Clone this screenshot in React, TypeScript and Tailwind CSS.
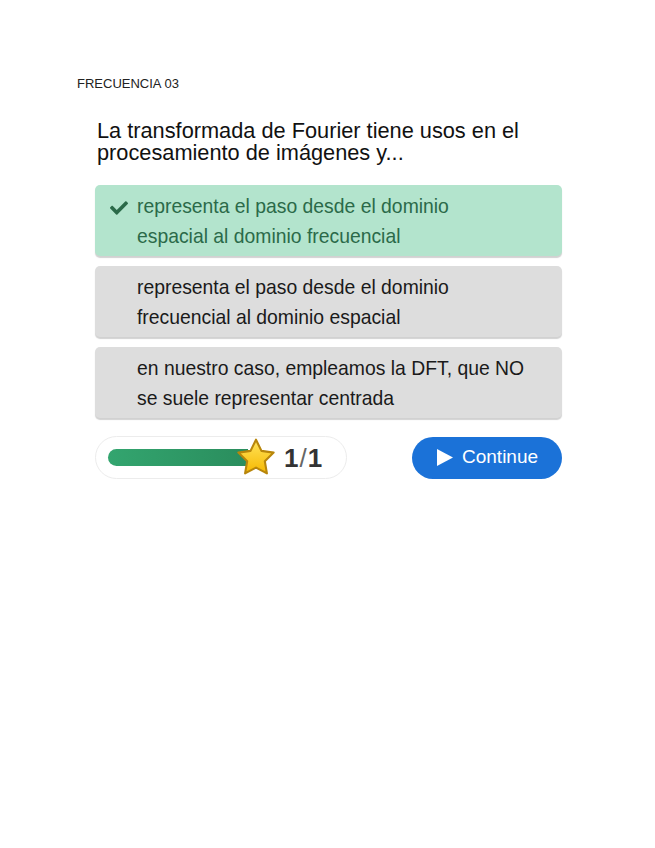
import React from "react";
import { FaCheck } from "react-icons/fa";

function Star() {
  return (
    <svg width="42" height="40" viewBox="0 0 40 38" className="absolute left-[-13px] top-[-12px]">
      <defs>
        <linearGradient id="sg" x1="0" y1="0" x2="0" y2="1">
          <stop offset="0" stopColor="#ffe45c" />
          <stop offset="1" stopColor="#f6b800" />
        </linearGradient>
      </defs>
      <path
        d="M20 2.5 L25.2 13.2 L36.8 14.8 L28.4 23 L30.4 34.6 L20 29.1 L9.6 34.6 L11.6 23 L3.2 14.8 L14.8 13.2 Z"
        fill="url(#sg)"
        stroke="#b8860b"
        strokeWidth="2"
        strokeLinejoin="round"
      />
    </svg>
  );
}

export default function App() {
  const font = { fontFamily: '"Liberation Sans", Arial, sans-serif' };
  return (
    <div className="w-[655px] h-[848px] bg-white" style={font}>
      <div className="pt-[76px] pl-[77px] text-[13px] leading-[16px] text-[#222]">FRECUENCIA 03</div>
      <div className="pl-[95px] w-[562px] box-content">
        <div className="mt-[28px] pl-[2px] text-[21.75px] leading-[22px] text-[#111]">
          La transformada de Fourier tiene usos en el
          <br />
          procesamiento de imágenes y...
        </div>
        <div className="mt-[21px] flex flex-col gap-[10px] w-[467px]">
          <div className="relative h-[71px] rounded-[5px] bg-[#b3e4cd] shadow-[0_2px_1px_rgba(0,0,0,0.18)] pl-[42px] flex items-center text-[19.35px] leading-[30px] text-[#2b6a49]">
            <FaCheck className="absolute left-[15px] top-[14px] text-[#2b6a49]" size={18} />
            <div>
              representa el paso desde el dominio
              <br />
              espacial al dominio frecuencial
            </div>
          </div>
          <div className="h-[71px] rounded-[5px] bg-[#dddddd] shadow-[0_2px_1px_rgba(0,0,0,0.18)] pl-[42px] flex items-center text-[19.35px] leading-[30px] text-[#1a1a1a]">
            <div>
              representa el paso desde el dominio
              <br />
              frecuencial al dominio espacial
            </div>
          </div>
          <div className="h-[71px] rounded-[5px] bg-[#dddddd] shadow-[0_2px_1px_rgba(0,0,0,0.18)] pl-[42px] flex items-center text-[19.35px] leading-[30px] text-[#1a1a1a]">
            <div>
              en nuestro caso, empleamos la DFT, que NO
              <br />
              se suele representar centrada
            </div>
          </div>
        </div>
        <div className="mt-[18px] flex items-center justify-between w-[467px]">
          <div className="w-[252px] h-[43px] rounded-full border border-[#ececec] flex items-center pl-[12px]">
            <div className="relative w-[140px] h-[17px] rounded-l-full bg-gradient-to-r from-[#33a56f] to-[#2a8d5d]">
              <div className="absolute left-[140px] top-0">
                <Star />
              </div>
            </div>
            <div className="ml-[36px] text-[26px] leading-[30px] font-bold text-[#333] tracking-[1px]">
              1<span className="font-normal text-[#666]">/</span>1
            </div>
          </div>
          <div className="w-[150px] h-[42px] rounded-full bg-[#1b72d8] flex items-center pl-[25px] gap-[9px] text-white text-[19px]">
            <svg width="16" height="17" viewBox="0 0 16 17">
              <path d="M0 0 L16 8.5 L0 17 Z" fill="white" />
            </svg>
            <span>Continue</span>
          </div>
        </div>
      </div>
    </div>
  );
}
